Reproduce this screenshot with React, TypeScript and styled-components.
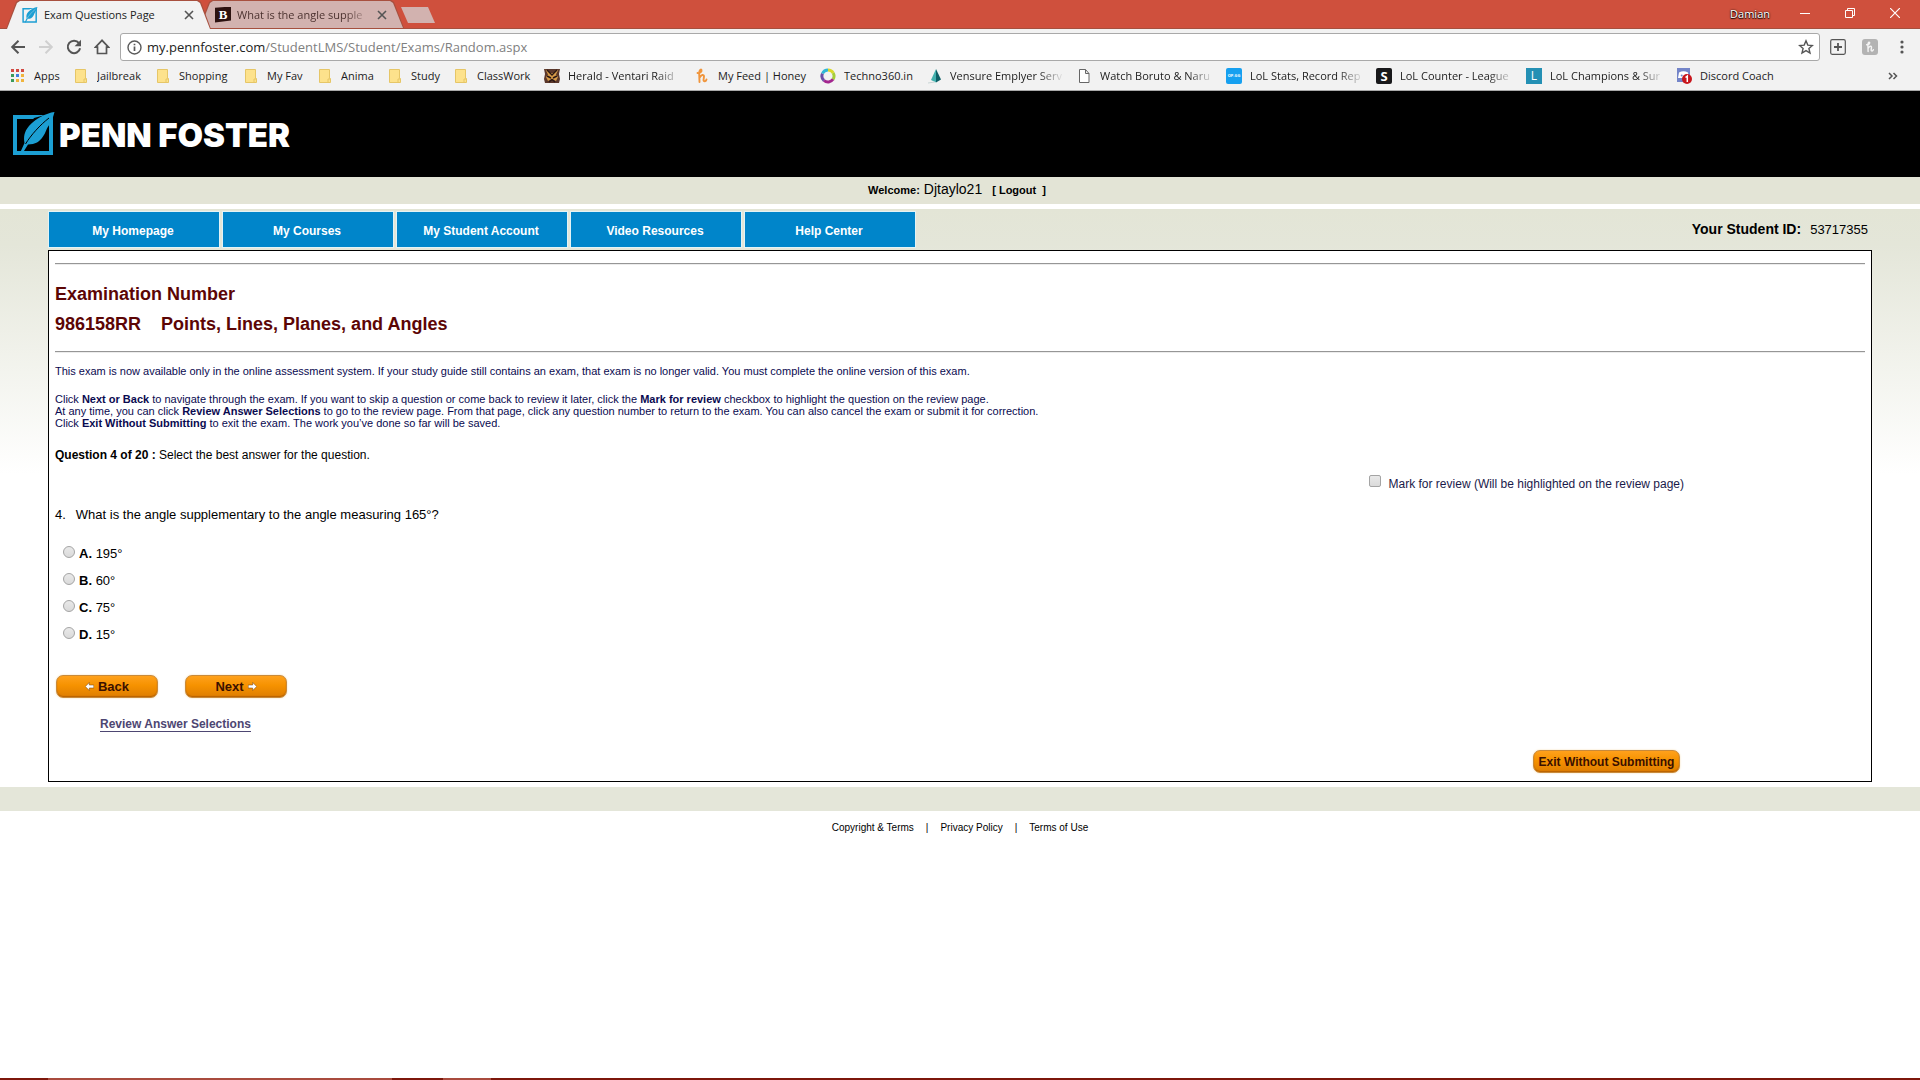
import React from "react";
import styled, { createGlobalStyle, css } from "styled-components";

const UI_FONT = '"Open Sans", "Noto Sans", sans-serif';
const PAGE_FONT = '"Liberation Sans", Arial, sans-serif';

const GlobalStyle = createGlobalStyle`
  *, *::before, *::after { box-sizing: border-box; }
  body { margin: 0; background: #fff; font-family: ${PAGE_FONT}; color: #000; }
  button, input { font: inherit; margin: 0; padding: 0; }
  a { color: inherit; text-decoration: none; }
  h1, h2, p { margin: 0; font-size: inherit; }
  svg { display: block; flex: none; }
`;

const Shell = styled.div`
  min-height: 100vh;
  display: flex;
  flex-direction: column;
`;

/* ---------- browser chrome ---------- */

const TabStrip = styled.header`
  display: flex;
  align-items: stretch;
  height: 29px;
  padding-left: 6px;
  background: #cf503d;
  border-bottom: 1px solid #a5503f;
  font-family: ${UI_FONT};
`;

const trapezoid = css`
  content: "";
  position: absolute;
  clip-path: polygon(0 100%, 10px 2px, 13px 0, calc(100% - 13px) 0, calc(100% - 10px) 2px, 100% 100%);
`;

const Tab = styled.div<{ $active?: boolean }>`
  position: relative;
  z-index: ${(p) => (p.$active ? 1 : 0)};
  display: flex;
  align-items: center;
  gap: 6px;
  width: 205px;
  height: 29px;
  padding: 0 17px 0 16px;
  margin-right: -12px;
  font-size: 11px;
  color: ${(p) => (p.$active ? "#222" : "#4c3330")};
  &::before {
    ${trapezoid}
    inset: 0 0 ${(p) => (p.$active ? 0 : 1)}px;
    background: #a8503f;
  }
  &::after {
    ${trapezoid}
    inset: 1px 1px ${(p) => (p.$active ? 0 : 1)}px;
    background: ${(p) => (p.$active ? "#f2f2f2" : "#d2b2af")};
  }
  > * { position: relative; z-index: 1; }
`;

const fade = css`
  mask-image: linear-gradient(to right, #000 calc(100% - 26px), transparent);
`;

const TabTitle = styled.span<{ $faded?: boolean }>`
  flex: 1;
  min-width: 0;
  overflow: hidden;
  white-space: nowrap;
  ${(p) => p.$faded && fade}
`;

const IconButton = styled.button`
  display: grid;
  place-items: center;
  border: 0;
  background: none;
  color: #555;
  flex: none;
`;

const NewTab = styled.button`
  align-self: center;
  width: 34px;
  height: 16px;
  margin: 2px 0 0 9px;
  border: 0;
  background: #d2b2af;
  clip-path: polygon(0 0, 27px 0, 34px 100%, 7px 100%);
`;

const WindowBar = styled.div`
  display: flex;
  align-items: center;
  margin-left: auto;
  padding: 0 20px 2px 0;
  gap: 35px;
  color: #fff;
  ${IconButton} { color: #fff; }
`;

const UserName = styled.span`
  font-size: 11px;
  text-shadow: 0 0 2px #000, 0 1px 1px #000;
  margin-right: -5px;
`;

const Toolbar = styled.div`
  display: flex;
  align-items: center;
  gap: 12px;
  height: 36px;
  padding: 0 10px;
  background: #f2f2f2;
  ${IconButton} { width: 16px; height: 28px; }
`;

const AddressBar = styled.form`
  flex: 1;
  display: flex;
  align-items: center;
  gap: 5px;
  height: 28px;
  margin: 0 -2px;
  padding: 0 5px 0 6px;
  border: 1px solid #a9a9a9;
  border-radius: 3px;
  background: #fff;
`;

const Address = styled.div`
  flex: 1;
  font: 13px/20px ${UI_FONT};
  color: #808080;
  b { font-weight: 400; color: #222; }
`;

const Extensions = styled.div`
  display: flex;
  align-items: center;
  gap: 16px;
`;

const BookmarkBar = styled.nav`
  display: flex;
  align-items: center;
  gap: 12px;
  height: 26px;
  padding: 0 22px 4px 10px;
  background: #f2f2f2;
  border-bottom: 1px solid #a8a8a8;
  font: 11px/16px ${UI_FONT};
  color: #1c1c1c;
`;

const Bookmark = styled.a`
  display: flex;
  align-items: center;
  gap: 8px;
`;

const BookmarkLabel = styled.span<{ $width: number; $faded?: boolean }>`
  width: ${(p) => p.$width}px;
  overflow: hidden;
  white-space: nowrap;
  ${(p) => p.$faded && fade}
`;

const Overflow = styled(IconButton)`
  margin-left: auto;
`;

/* ---------- page ---------- */

const Banner = styled.div`
  display: flex;
  align-items: center;
  gap: 3px;
  height: 86px;
  padding-left: 12px;
  background: #000;
`;

const Wordmark = styled.span`
  padding-top: 2px;
  font: 900 33px/32px Inter, sans-serif;
  color: #fff;
`;

const Welcome = styled.div`
  display: flex;
  justify-content: center;
  align-items: baseline;
  gap: 4px;
  height: 27px;
  line-height: 24px;
  padding-right: 6px;
  background: #e3e4d6;
  font-size: 11px;
  font-weight: 700;
  white-space: pre;
  span { font-size: 14px; font-weight: 400; }
  a { margin-left: 6px; }
`;

const Main = styled.main`
  margin-top: 5px;
  padding: 3px 48px 5px;
  background: linear-gradient(#e3e5d6 0, #e4e6d9 36px, #fff 265px);
`;

const NavRow = styled.div`
  display: flex;
  justify-content: space-between;
  height: 38px;
  padding: 0 4px 3px 1px;
`;

const Nav = styled.nav`
  display: flex;
  gap: 4px;
`;

const NavLink = styled.a`
  width: 170px;
  padding: 3px 2px 0 0;
  font: bold 12px/32px ${PAGE_FONT};
  text-align: center;
  color: #fff;
  background: #0085ca;
  box-shadow: 0 0 0 1px #e2f3f6;
`;

const StudentId = styled.div`
  display: flex;
  align-items: baseline;
  gap: 9px;
  font-size: 13px;
  line-height: 34px;
  b { font-size: 14px; }
`;

const Panel = styled.section`
  border: 1px solid #000;
  background: #fff;
  padding: 12px 6px 8px;
`;

const Rule = styled.hr`
  margin: 0;
  border: 0;
  height: 2px;
  background: #ececec;
  border-top: 1px solid #969696;
`;

const Heading = styled.header`
  padding: 14px 0 12px;
  font: bold 18px/30px ${PAGE_FONT};
  color: #5c0505;
  h2 { display: flex; gap: 20px; }
`;

const Notes = styled.div`
  display: grid;
  gap: 16px;
  padding: 12px 0 18px;
  font-size: 11px;
  line-height: 12px;
  color: #0a0a50;
`;

const Prompt = styled.p`
  font-size: 12px;
  line-height: 16px;
`;

const ReviewMark = styled.div`
  display: flex;
  justify-content: flex-end;
  gap: 8px;
  margin-top: 12px;
  padding-right: 10%;
  font-size: 12px;
  line-height: 18px;
  color: #1a1a4a;
`;

const Tick = styled.input`
  appearance: none;
  flex: none;
  width: 12px;
  height: 12px;
  margin-bottom: 4px;
  border: 1px solid #a4a4a4;
  border-radius: ${(p) => (p.type === "radio" ? "50%" : "2px")};
  background: linear-gradient(#e9e9e9, #dadada);
  &:checked { background: #0085ca; }
`;

const Question = styled.p`
  display: flex;
  gap: 10px;
  margin-top: 14px;
  font-size: 13px;
  line-height: 16px;
`;

const Answers = styled.fieldset`
  display: grid;
  margin: 17px 0 0;
  padding: 0 8px;
  border: 0;
`;

const Answer = styled.label`
  display: flex;
  align-items: center;
  gap: 4px;
  height: 27px;
  font-size: 13px;
  line-height: 16px;
`;

const Actions = styled.div`
  display: flex;
  gap: 27px;
  margin-top: 27px;
  padding-left: 1px;
`;

const OrangeButton = styled.button<{ $wide?: boolean }>`
  display: flex;
  align-items: center;
  justify-content: center;
  gap: 4px;
  width: ${(p) => (p.$wide ? 147 : 102)}px;
  height: 23px;
  border: 1px solid #c98a3a;
  border-radius: 7px;
  background: linear-gradient(#ffa11c, #f69200 45%, #de7d00);
  box-shadow: inset 0 -1px 1px #b86200, 0 0 2px #f3d9a8;
  font: bold ${(p) => (p.$wide ? 12 : 13)}px/16px ${PAGE_FONT};
  color: #3a1000;
`;

const ReviewLink = styled.a`
  display: inline-block;
  margin: 19px 0 0 45px;
  border-bottom: 1px solid #4d4672;
  font: bold 12px/14px ${PAGE_FONT};
  color: #4d4672;
`;

const ExitRow = styled.div`
  display: flex;
  justify-content: flex-end;
  margin-top: 18px;
  padding-right: calc(10% + 4px);
`;

const Band = styled.div`
  height: 24px;
  background: #e4e6d9;
`;

const Footer = styled.footer`
  display: flex;
  justify-content: center;
  gap: 12px;
  padding-top: 10px;
  font-size: 10px;
  line-height: 14px;
`;

const TaskbarEdge = styled.div`
  display: grid;
  grid-template-columns: 48px 344px 51px 48px 1fr;
  height: 2px;
  margin-top: auto;
  background: #7d170b;
  i { background: #a94b3e; }
  i:first-child { grid-column: 2; }
  i:last-child { grid-column: 4; }
`;

/* ---------- drawings ---------- */

const Quill = ({ size, bg }: { size: number; bg: string }) => (
  <svg width={size} height={size} viewBox="0 0 44 44">
    <path d="M3 5h36v36H3z" fill={bg} stroke="#1c9fd3" strokeWidth="4" />
    <path d="M44 0 38 5 35 20 28 29 18 33 12 37 10 33 12 20 22 6z" fill={bg} />
    <path d="M42.500 0C34 1 23 7 17 14c-5 6-5.500 11-4.500 17L8 41l1.500 2L16 32.500c7 0 12-3 15-8 3-4 3-7 5.500-10.500C39 10 41 6 42.500 0z" fill="#1c9fd3" />
    <path d="M37 6C28 13 19 23 13.500 32" fill="none" stroke={bg} strokeWidth="1" />
  </svg>
);

const Cross = () => (
  <svg width="10" height="10" viewBox="0 0 10 10">
    <path d="m1 1 8 8M9 1 1 9" stroke="currentColor" strokeWidth="1.6" />
  </svg>
);

const Folder = () => (
  <svg width="16" height="16" viewBox="0 0 16 16">
    <path d="M2.500 1.500h10v9h1v4h-11z" fill="#fde28c" stroke="#e6c667" />
    <path d="M11 14v-3h2" fill="none" stroke="#e6c667" />
  </svg>
);

const AppsIcon = () => (
  <svg width="16" height="16" viewBox="0 0 16 16">
    {["#d24a43", "#d24a43", "#d24a43", "#3a9a5b", "#3f7fe0", "#f0b43c", "#3a9a5b", "#f0b43c", "#f0b43c"].map((c, i) => (
      <rect key={i} x={1 + (i % 3) * 5} y={1 + Math.floor(i / 3) * 5} width="3" height="3" fill={c} />
    ))}
  </svg>
);

const Herald = () => (
  <svg width="16" height="16" viewBox="0 0 16 16">
    <path d="M0 1l4 0h8l4 0-1 5 1 5-1 4H1l-1-4 1-5z" fill="#5a372b" />
    <path d="M1.500 1.500 6.500 5h3l5-3.500-2.500 5 2 2.500-2 4-4-2-4 2-2-4 2-2.500z" fill="#d59a48" />
    <path d="M3 2l5 5 5-5M3 8l4 2M13 8l-4 2M5 14l3-2.500 3 2.500" fill="none" stroke="#2b1713" strokeWidth="1.400" />
  </svg>
);

const HoneyMark = ({ color }: { color: string }) => (
  <path
    d="M3.500 5C6 5.500 8 3.500 7.500 2 6.500.5 5 3 5.200 6L5.500 14M5.500 10C7 6.500 10 6 10 8.500L9.500 12c0 2 2.500 1.500 3-.5"
    fill="none"
    stroke={color}
    strokeWidth="1.900"
    strokeLinecap="round"
  />
);

const Honey = () => (
  <svg width="16" height="16" viewBox="0 0 16 16"><HoneyMark color="#f0953c" /></svg>
);

const Techno = () => (
  <svg width="16" height="16" viewBox="0 0 16 16" fill="none" strokeWidth="3">
    <path d="M8 2a6 6 0 0 1 5.200 3" stroke="#d8d92a" />
    <path d="M13.200 5A6 6 0 0 1 13 11.300" stroke="#a6ce39" />
    <path d="M13 11.300A6 6 0 0 1 4 12.500" stroke="#a3278f" />
    <path d="M4 12.500A6 6 0 0 1 2.500 5.500" stroke="#6a4fa8" />
    <path d="M2.500 5.500A6 6 0 0 1 8 2" stroke="#2fb7d6" />
  </svg>
);

const Vensure = () => (
  <svg width="16" height="16" viewBox="0 0 16 16">
    <path d="M10 1 5 12 10 14.500z" fill="#43b0ad" />
    <path d="M10 1v13.500l5-3z" fill="#0e5f66" />
    <path d="M2 15l7-1" stroke="#c9d6d6" />
  </svg>
);

const PageIcon = () => (
  <svg width="16" height="16" viewBox="0 0 16 16">
    <path d="M3.500 1.500h6l3.500 4v9H3.500zM9.500 1.500v4H13" fill="#fff" stroke="#666" />
  </svg>
);

const Badge = styled.span<{ $bg: string; $size: number; $bold?: boolean; $round?: boolean }>`
  display: grid;
  place-items: center;
  flex: none;
  width: 16px;
  height: 16px;
  border-radius: ${(p) => (p.$round ? 2 : 0)}px;
  background: ${(p) => p.$bg};
  color: #fff;
  font: ${(p) => (p.$bold ? 700 : 400)} ${(p) => p.$size}px/16px ${UI_FONT};
`;

const Discord = () => (
  <svg width="16" height="16" viewBox="0 0 16 16">
    <path d="M1 0h13v14H1z" fill="#7485c9" />
    <path d="M3 4.500c3-1.600 6-1.600 9 0L13 10H2z" fill="#fff" />
    <circle cx="5.700" cy="7.500" r="1" fill="#7485c9" />
    <circle cx="11" cy="11" r="5" fill="#c8161d" />
    <path d="M9.500 9.500 11.300 8v6" fill="none" stroke="#fff" strokeWidth="1.500" />
  </svg>
);

const Brainly = styled(Badge)`
  border-radius: 0;
  clip-path: polygon(0 8%, 100% 0, 100% 88%, 0 100%);
  font-family: "Liberation Serif", serif;
`;

const Arrow = ({ left }: { left?: boolean }) => (
  <svg width="9" height="9" viewBox="0 0 9 9">
    <path
      d={left ? "M.3 4.500 4.300.5v2.500h4.500v3H4.300v2.500z" : "M8.700 4.500 4.700.5v2.500H.2v3h4.500v2.500z"}
      fill="#fff"
      stroke="#6b3a08"
      strokeWidth=".5"
    />
  </svg>
);

const bookmarks: { label: string; width: number; icon: React.ReactNode; faded?: boolean }[] = [
  { label: "Apps", width: 27, icon: <AppsIcon /> },
  { label: "Jailbreak", width: 46, icon: <Folder /> },
  { label: "Shopping", width: 52, icon: <Folder /> },
  { label: "My Fav", width: 38, icon: <Folder /> },
  { label: "Anima", width: 34, icon: <Folder /> },
  { label: "Study", width: 30, icon: <Folder /> },
  { label: "ClassWork", width: 55, icon: <Folder /> },
  { label: "Herald - Ventari Raid", width: 114, icon: <Herald />, faded: true },
  { label: "My Feed | Honey", width: 90, icon: <Honey /> },
  { label: "Techno360.in", width: 70, icon: <Techno /> },
  { label: "Vensure Emplyer Serv", width: 114, icon: <Vensure />, faded: true },
  { label: "Watch Boruto & Naru", width: 114, icon: <PageIcon />, faded: true },
  { label: "LoL Stats, Record Rep", width: 114, icon: <Badge $bg="#16a0f0" $size={4} $bold $round>OP.GG</Badge>, faded: true },
  { label: "LoL Counter - League", width: 114, icon: <Badge $bg="#18181a" $size={13} $bold $round>S</Badge>, faded: true },
  { label: "LoL Champions & Sur", width: 114, icon: <Badge $bg="#2490b4" $size={12}>L</Badge>, faded: true },
  { label: "Discord Coach", width: 78, icon: <Discord /> },
];

const navItems = ["My Homepage", "My Courses", "My Student Account", "Video Resources", "Help Center"];

const choices = [
  ["A", "195°"],
  ["B", "60°"],
  ["C", "75°"],
  ["D", "15°"],
];

export default function App() {
  return (
    <Shell>
      <GlobalStyle />
      <TabStrip>
        <Tab $active>
          <Quill size={16} bg="#f2f2f2" />
          <TabTitle>Exam Questions Page</TabTitle>
          <IconButton aria-label="Close tab"><Cross /></IconButton>
        </Tab>
        <Tab>
          <Brainly $bg="#2c1210" $size={13} $bold>B</Brainly>
          <TabTitle $faded>What is the angle supple</TabTitle>
          <IconButton aria-label="Close tab"><Cross /></IconButton>
        </Tab>
        <NewTab aria-label="New tab" />
        <WindowBar>
          <UserName>Damian</UserName>
          <IconButton aria-label="Minimize">
            <svg width="10" height="10" viewBox="0 0 10 10"><path d="M0 5.500h10" stroke="currentColor" /></svg>
          </IconButton>
          <IconButton aria-label="Restore">
            <svg width="10" height="10" viewBox="0 0 10 10"><path d="M.5 2.500h7v7h-7zM2.500 2.500v-2h7v7h-2" fill="none" stroke="currentColor" /></svg>
          </IconButton>
          <IconButton aria-label="Close">
            <svg width="10" height="10" viewBox="0 0 10 10"><path d="m0 0 10 10M10 0 0 10" stroke="currentColor" strokeWidth="1.200" /></svg>
          </IconButton>
        </WindowBar>
      </TabStrip>

      <Toolbar>
        <IconButton aria-label="Back">
          <svg width="16" height="16" viewBox="0 0 16 16"><path d="M15 8H2.500M8.500 1.700 2.200 8l6.300 6.300" fill="none" stroke="#555" strokeWidth="2" /></svg>
        </IconButton>
        <IconButton aria-label="Forward">
          <svg width="16" height="16" viewBox="0 0 16 16"><path d="M1 8h12.500M7.500 1.700 13.800 8l-6.300 6.300" fill="none" stroke="#d0d0d0" strokeWidth="2" /></svg>
        </IconButton>
        <IconButton aria-label="Reload">
          <svg width="16" height="16" viewBox="0 0 16 16">
            <path d="M13 4.200A6.200 6.200 0 1 0 14.100 9.200" fill="none" stroke="#555" strokeWidth="2" />
            <path d="M15 .8v6.400H8.600z" fill="#555" />
          </svg>
        </IconButton>
        <IconButton aria-label="Home">
          <svg width="16" height="16" viewBox="0 0 16 16"><path d="M8 1.300 1.500 8.200H3.500V14.500h9V8.200h2z" fill="none" stroke="#555" strokeWidth="1.700" /></svg>
        </IconButton>
        <AddressBar>
          <svg width="15" height="15" viewBox="0 0 15 15">
            <circle cx="7.500" cy="7.500" r="6.500" fill="none" stroke="#5a5a5a" strokeWidth="1.400" />
            <path d="M7.500 6.500v4.500M7.500 3.700v1.600" stroke="#5a5a5a" strokeWidth="1.700" />
          </svg>
          <Address><b>my.pennfoster.com</b>/StudentLMS/Student/Exams/Random.aspx</Address>
          <IconButton type="button" aria-label="Bookmark this page">
            <svg width="16" height="16" viewBox="0 0 16 16"><path d="m8 1.800 1.800 4.300 4.600.4-3.500 3 1.100 4.500L8 11.600 4 14l1.100-4.500-3.500-3 4.600-.4z" fill="none" stroke="#555" strokeWidth="1.400" /></svg>
          </IconButton>
        </AddressBar>
        <Extensions>
          <IconButton aria-label="Add extension">
            <svg width="16" height="16" viewBox="0 0 16 16">
              <rect x=".7" y=".7" width="14.600" height="14.600" rx="1.500" fill="none" stroke="#555" strokeWidth="1.200" />
              <path d="M8 4v8M4 8h8" stroke="#555" strokeWidth="1.800" />
            </svg>
          </IconButton>
          <IconButton aria-label="Honey">
            <svg width="16" height="16" viewBox="0 0 16 16">
              <rect width="16" height="16" rx="3" fill="#b3b3b3" />
              <g transform="translate(2 2) scale(.75)"><HoneyMark color="#f4f4f4" /></g>
            </svg>
          </IconButton>
          <IconButton aria-label="Menu">
            <svg width="16" height="16" viewBox="0 0 16 16" fill="#555"><circle cx="8" cy="3" r="1.600" /><circle cx="8" cy="8" r="1.600" /><circle cx="8" cy="13" r="1.600" /></svg>
          </IconButton>
        </Extensions>
      </Toolbar>

      <BookmarkBar>
        {bookmarks.map((b) => (
          <Bookmark key={b.label} href="#">
            {b.icon}
            <BookmarkLabel $width={b.width} $faded={b.faded}>{b.label}</BookmarkLabel>
          </Bookmark>
        ))}
        <Overflow aria-label="More bookmarks">
          <svg width="10" height="8" viewBox="0 0 10 8"><path d="m1 1 3 3-3 3M5.500 1l3 3-3 3" fill="none" stroke="currentColor" strokeWidth="1.500" /></svg>
        </Overflow>
      </BookmarkBar>

      <Banner>
        <Quill size={44} bg="#000" />
        <Wordmark>PENN FOSTER</Wordmark>
      </Banner>
      <Welcome>Welcome:<span>Djtaylo21</span><a href="#">[ Logout  ]</a></Welcome>

      <Main>
        <NavRow>
          <Nav>
            {navItems.map((n) => (
              <NavLink key={n} href="#">{n}</NavLink>
            ))}
          </Nav>
          <StudentId><b>Your Student ID:</b><span>53717355</span></StudentId>
        </NavRow>
        <Panel>
          <Rule />
          <Heading>
            <h1>Examination Number</h1>
            <h2><span>986158RR</span><span>Points, Lines, Planes, and Angles</span></h2>
          </Heading>
          <Rule />
          <Notes>
            <p>This exam is now available only in the online assessment system. If your study guide still contains an exam, that exam is no longer valid. You must complete the online version of this exam.</p>
            <p>
              Click <b>Next or Back</b> to navigate through the exam. If you want to skip a question or come back to review it later, click the <b>Mark for review</b> checkbox to highlight the question on the review page.<br />
              At any time, you can click <b>Review Answer Selections</b> to go to the review page. From that page, click any question number to return to the exam. You can also cancel the exam or submit it for correction.<br />
              Click <b>Exit Without Submitting</b> to exit the exam. The work you’ve done so far will be saved.
            </p>
          </Notes>
          <Prompt><b>Question 4 of 20 :</b> Select the best answer for the question.</Prompt>
          <ReviewMark>
            <Tick type="checkbox" id="mark" />
            <label htmlFor="mark">Mark for review (Will be highlighted on the review page)</label>
          </ReviewMark>
          <Question><span>4.</span><span>What is the angle supplementary to the angle measuring 165°?</span></Question>
          <Answers aria-label="Answers">
            {choices.map(([letter, text]) => (
              <Answer key={letter}>
                <Tick type="radio" name="answer" />
                <span><b>{letter}.</b> {text}</span>
              </Answer>
            ))}
          </Answers>
          <Actions>
            <OrangeButton><Arrow left />Back</OrangeButton>
            <OrangeButton>Next<Arrow /></OrangeButton>
          </Actions>
          <ReviewLink href="#">Review Answer Selections</ReviewLink>
          <ExitRow><OrangeButton $wide>Exit Without Submitting</OrangeButton></ExitRow>
        </Panel>
      </Main>
      <Band />
      <Footer>
        <a href="#">Copyright &amp; Terms</a><span>|</span><a href="#">Privacy Policy</a><span>|</span><a href="#">Terms of Use</a>
      </Footer>
      <TaskbarEdge><i /><i /></TaskbarEdge>
    </Shell>
  );
}
